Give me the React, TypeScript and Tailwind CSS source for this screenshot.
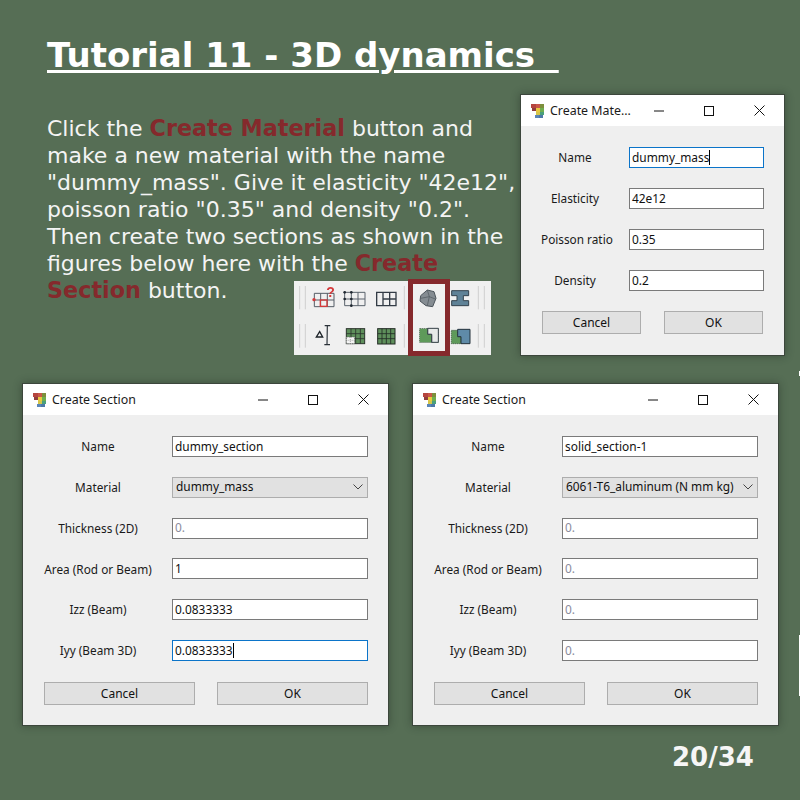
import React from "react";

const dialogFont = { fontFamily: '"Noto Sans", sans-serif' };

function AppIcon() {
  return (
    <svg width="14" height="16" viewBox="0 0 14 16" className="shrink-0">
      <rect x="0" y="1" width="5" height="4" fill="#b5453f" />
      <rect x="5" y="1" width="4" height="4" fill="#c9574a" />
      <rect x="9" y="1" width="4" height="4" fill="#7d8f3c" />
      <rect x="1" y="5" width="4" height="3" fill="#8f3d3d" />
      <rect x="5" y="5" width="4" height="4" fill="#e8c93f" />
      <rect x="9" y="5" width="4" height="4" fill="#6fae4f" />
      <rect x="5" y="9" width="4" height="3" fill="#d5c64a" />
      <rect x="9" y="9" width="4" height="3" fill="#4aa07c" />
      <rect x="4" y="12" width="4" height="3" fill="#5b86b8" />
      <rect x="8" y="12" width="4" height="3" fill="#4d79a8" />
    </svg>
  );
}

function TitleBar({ title }: { title: string }) {
  return (
    <div className="flex h-[31px] items-center bg-white pl-[10px] text-black">
      <AppIcon />
      <div className="ml-[5px] flex-1 whitespace-nowrap pt-px text-[12.4px] text-[#1a1a1a]">{title}</div>
      <div className="flex h-full w-[50px] items-center justify-center">
        <svg width="10" height="10" viewBox="0 0 10 10"><path d="M0 5H10" stroke="#111" strokeWidth="1" /></svg>
      </div>
      <div className="flex h-full w-[50px] items-center justify-center">
        <svg width="10" height="10" viewBox="0 0 10 10"><rect x="0.5" y="0.5" width="9" height="9" fill="none" stroke="#111" strokeWidth="1" /></svg>
      </div>
      <div className="flex h-full w-[50px] items-center justify-center">
        <svg width="11" height="11" viewBox="0 0 11 11"><path d="M0.5 0.5L10.5 10.5M10.5 0.5L0.5 10.5" stroke="#111" strokeWidth="1" /></svg>
      </div>
    </div>
  );
}

type Row = { label: string; value: string; kind?: "combo" | "hint"; focus?: boolean };

function Field({ row }: { row: Row }) {
  if (row.kind === "combo") {
    return (
      <div className="flex h-[21px] items-center justify-between border border-[#adadad] bg-[#e1e1e1] pl-[3px] pr-[4px] text-[11.9px] text-[#111]">
        <span>{row.value}</span>
        <svg width="10" height="6" viewBox="0 0 10 6"><path d="M0.5 0.5L5 5L9.5 0.5" fill="none" stroke="#444" strokeWidth="1" /></svg>
      </div>
    );
  }
  return (
    <div
      className={`flex h-[21px] items-center border bg-white pl-[2px] text-[11.9px] ${row.focus ? "border-[#0b74c9]" : "border-[#7a7a7a]"} ${row.kind === "hint" ? "text-[#8b8b9c]" : "text-[#111]"}`}
    >
      <span>{row.value}</span>
      {row.focus && <span className="h-[15px] w-px bg-black" />}
    </div>
  );
}

function Form({ rows, rowsClass }: { rows: Row[]; rowsClass: string }) {
  return (
    <div className={`flex flex-col ${rowsClass}`}>
      {rows.map((r) => (
        <div key={r.label} className="flex items-center">
          <div className="shrink-0 whitespace-nowrap pt-px text-center text-[11.8px] text-[#1a1a1a] [width:var(--label)] [margin-right:var(--gap)]">{r.label}</div>
          <div className="min-w-0 flex-1">
            <Field row={r} />
          </div>
        </div>
      ))}
    </div>
  );
}

function Buttons({ gap }: { gap: string }) {
  return (
    <div className={`flex ${gap}`}>
      {["Cancel", "OK"].map((t) => (
        <div key={t} className="flex h-[23px] flex-1 items-center justify-center border border-[#adadad] bg-[#e1e1e1] pt-px text-[12px] text-[#111]">
          {t}
        </div>
      ))}
    </div>
  );
}

function Toolbar() {
  return (
    <div className="absolute left-[294px] top-[281px] h-[74px] w-[197px] bg-[#f0f0f0]">
      <svg width="197" height="74" viewBox="12 18 591 222" className="blur-[0.4px]">
        <g stroke="#cfcfcf" strokeWidth="3">
          <path d="M29 33V103M46 33V103M343 33V103M565 33V103M583 33V103" />
          <path d="M29 147V218M46 147V218M343 147V218M565 147V218M583 147V218" />
        </g>
        {/* icon 1 */}
        <g fill="none" stroke="#555d66" strokeWidth="3">
          <path d="M73 55H132V95H73ZM73 75H132M92 55V95M112 55V95" />
        </g>
        <rect x="91" y="75" width="20" height="19" fill="none" stroke="#d4393a" strokeWidth="4" />
        <circle cx="72" cy="74" r="5" fill="#d4393a" />
        <text x="109" y="66" fontFamily="Liberation Sans" fontWeight="700" fontSize="42" fill="#d4393a">?</text>
        {/* icon 2 */}
        <g fill="none" stroke="#5a636c" strokeWidth="3">
          <path d="M164 52H225V92H164ZM164 72H225M184 52V92M204 52V92" />
        </g>
        <g fill="#1f2730">
          <circle cx="164" cy="52" r="4" /><circle cx="184" cy="52" r="4" /><circle cx="164" cy="72" r="4" />
          <circle cx="184" cy="72" r="4" /><circle cx="184" cy="92" r="4" />
        </g>
        {/* icon 3 */}
        <g fill="none" stroke="#333c46" strokeWidth="4">
          <path d="M260 52H318V92H260ZM279 72H318M279 52V92M299 52V92" />
        </g>
        {/* rock */}
        <path d="M412 45L432 50L438 70L428 95L408 92L390 78L392 62Z" fill="#858c92" stroke="#4c545b" strokeWidth="3" />
        <path d="M412 45L418 65L392 70M418 65L436 72M418 65L412 92" fill="none" stroke="#4c545b" strokeWidth="2" />
        {/* i-beam */}
        <path d="M485 47H536V62H520V77H536V92H485V77H501V62H485Z" fill="#5f8297" stroke="#33424d" strokeWidth="3" />
        {/* triangle + bar */}
        <path d="M89 170L98 186H79Z" fill="none" stroke="#1d2329" strokeWidth="4" />
        <path d="M104 152H121M112 152L111 209M103 209H120" fill="none" stroke="#2a3138" strokeWidth="3.5" />
        {/* green grids */}
        <rect x="169" y="161" width="55" height="45" fill="#5e8f5b" stroke="#2a332c" strokeWidth="3" />
        <path d="M169 176H224M169 191H224M183 161V206M197 161V206M211 161V206" stroke="#2a332c" strokeWidth="2.5" />
        <rect x="169" y="186" width="25" height="20" fill="#f4f4f4" stroke="#555" strokeWidth="2" strokeDasharray="4 3" />
        <path d="M169 196H194M181 186V206" stroke="#888" strokeWidth="2" strokeDasharray="3 3" />
        <rect x="263" y="161" width="52" height="46" fill="#5e8f5b" stroke="#222b25" strokeWidth="3" />
        <path d="M263 176H315M263 191H315M276 161V207M289 161V207M302 161V207" stroke="#222b25" strokeWidth="2.5" />
        {/* L shapes */}
        <path d="M389 161H445V202H389Z" fill="#5e9a5a" stroke="#47604a" strokeWidth="2.5" strokeDasharray="4 2" />
        <path d="M413 160H445V202H425V178H413Z" fill="#e6e9e8" stroke="#3a444c" strokeWidth="3" />
        <path d="M425 178V201H390V162H413V178Z" fill="#5e9a5a" />
        <path d="M425 178V202M413 160V178H425" fill="none" stroke="#3a444c" strokeWidth="3" />
        <path d="M484 166H503V185H513V206H484Z" fill="#5e9a5a" stroke="#47604a" strokeWidth="2.5" strokeDasharray="4 2" />
        <path d="M503 163H540V206H513V185H503Z" fill="#5f8ba8" stroke="#25333d" strokeWidth="3" />
      </svg>
    </div>
  );
}

const section1: Row[] = [
  { label: "Name", value: "dummy_section" },
  { label: "Material", value: "dummy_mass", kind: "combo" },
  { label: "Thickness (2D)", value: "0.", kind: "hint" },
  { label: "Area (Rod or Beam)", value: "1" },
  { label: "Izz (Beam)", value: "0.0833333" },
  { label: "Iyy (Beam 3D)", value: "0.0833333", focus: true },
];

const section2: Row[] = [
  { label: "Name", value: "solid_section-1" },
  { label: "Material", value: "6061-T6_aluminum (N mm kg)", kind: "combo" },
  { label: "Thickness (2D)", value: "0.", kind: "hint" },
  { label: "Area (Rod or Beam)", value: "0.", kind: "hint" },
  { label: "Izz (Beam)", value: "0.", kind: "hint" },
  { label: "Iyy (Beam 3D)", value: "0.", kind: "hint" },
];

const material: Row[] = [
  { label: "Name", value: "dummy_mass", focus: true },
  { label: "Elasticity", value: "42e12" },
  { label: "Poisson ratio", value: "0.35" },
  { label: "Density", value: "0.2" },
];

function SectionDialog({ rows, left }: { rows: Row[]; left: string }) {
  return (
    <div
      className={`absolute top-[383px] flex h-[343px] w-[367px] flex-col border border-[#3c463c] bg-[#efefef] shadow-[0_0_8px_rgba(30,40,30,0.45)] ${left}`}
      style={dialogFont}
    >
      <TitleBar title="Create Section" />
      <div className="flex flex-1 flex-col pl-[21px] pr-5 pt-[21px] [--label:108px] [--gap:20px]">
        <Form rows={rows} rowsClass="gap-[19.8px]" />
        <div className="mt-[21px]">
          <Buttons gap="gap-[22px]" />
        </div>
      </div>
    </div>
  );
}

export default function App() {
  return (
    <div className="relative h-[800px] w-[800px] overflow-hidden bg-[#566e55]" style={{ fontFamily: '"DejaVu Sans", sans-serif' }}>
      <div className="px-[47px] pt-[35px]">
        <h1 className="whitespace-pre text-[34px] font-bold leading-[40px] text-white underline decoration-[3px] underline-offset-[3px]">Tutorial 11 - 3D dynamics  </h1>
        <p className="mt-[40px] text-[22px] leading-[27px] text-[#f4f4f4]">
          Click the <b className="text-[22.3px] font-bold text-[#85292c]">Create Material</b> button and
          <br />
          make a new material with the name
          <br />
          "dummy_mass". Give it elasticity "42e12",
          <br />
          poisson ratio "0.35" and density "0.2".
          <br />
          Then create two sections as shown in the
          <br />
          figures below here with the <b className="text-[22.3px] font-bold text-[#85292c]">Create</b>
          <br />
          <b className="text-[22.3px] font-bold text-[#85292c]">Section</b> button.
        </p>
      </div>

      <Toolbar />
      <div className="absolute left-[408px] top-[279px] h-[77px] w-[42px] border-[5px] border-[#85292c]" />

      <div
        className="absolute left-[520px] top-[94px] flex h-[262px] w-[265px] flex-col border border-[#3c463c] bg-[#efefef] shadow-[0_0_8px_rgba(30,40,30,0.45)]"
        style={dialogFont}
      >
        <TitleBar title="Create Mate..." />
        <div className="flex flex-1 flex-col pl-5 pr-5 pt-[21px] [--label:68px] [--gap:20px]">
          <Form rows={material} rowsClass="gap-5" />
          <div className="mt-[20px] px-px">
            <Buttons gap="gap-[23px]" />
          </div>
        </div>
      </div>

      <SectionDialog rows={section1} left="left-[22px]" />
      <SectionDialog rows={section2} left="left-[412px]" />

      <div className="absolute left-[672px] top-[741px] text-[26px] font-bold leading-[32px] text-[#f6f6f6]">20/34</div>

      <div className="absolute left-[799px] top-[371px] h-[5px] w-px bg-white" />
      <div className="absolute left-[799px] top-[635px] h-[61px] w-px bg-white" />
    </div>
  );
}
